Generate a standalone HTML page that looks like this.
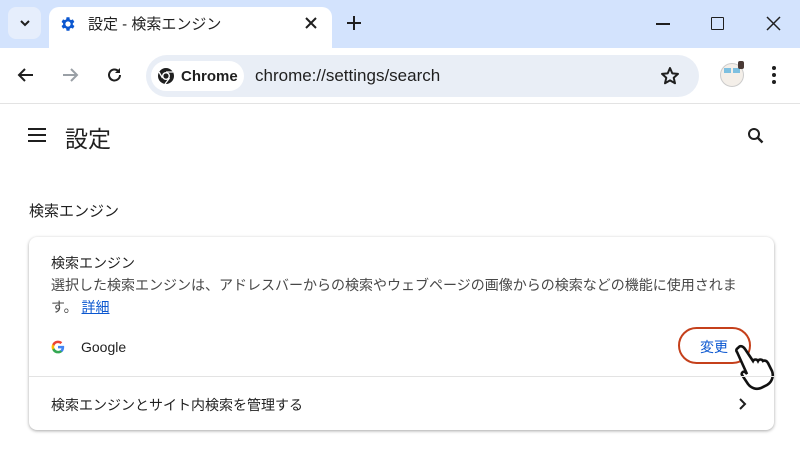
<!DOCTYPE html><html><head><meta charset="utf-8"><style>
*{margin:0;padding:0;box-sizing:border-box}
body{width:800px;height:457px;overflow:hidden;background:#fff;font-family:"Liberation Sans","Noto Sans CJK JP",sans-serif;color:#1f1f1f;position:relative}
.abs{position:absolute}
</style></head><body>
<div class="abs" style="left:0;top:0;width:800px;height:48px;background:#d3e3fd"></div>
<div class="abs" style="left:8px;top:7px;width:33px;height:32px;border-radius:8px;background:#e6eefc"></div>
<svg class="abs" style="left:18px;top:17px" width="14" height="12"><path d="M3 4l4 4 4-4" stroke="#1f1f1f" stroke-width="2" fill="none"/></svg>
<div class="abs" style="left:49px;top:7px;width:283px;height:45px;background:#fff;border-radius:10px 10px 0 0"></div>
<svg class="abs" style="left:59px;top:15px" width="18" height="18" viewBox="0 0 24 24"><path fill="#0b57d0" d="M19.4 13a7.5 7.5 0 000-2l2.1-1.6-2-3.5-2.5 1a7 7 0 00-1.7-1L15 3h-4l-.4 2.9a7 7 0 00-1.7 1l-2.5-1-2 3.5L6.5 11a7.5 7.5 0 000 2l-2.1 1.6 2 3.5 2.5-1a7 7 0 001.7 1L11 21h4l.4-2.9a7 7 0 001.7-1l2.5 1 2-3.5zM13 15.5a3.5 3.5 0 110-7 3.5 3.5 0 010 7z" transform="translate(-1 0)"/></svg>
<div class="abs" style="left:88px;top:13px;font-size:15px;color:#1f1f1f">設定 - 検索エンジン</div>
<svg class="abs" style="left:305px;top:17px" width="12" height="12"><path d="M1 1l10 10M11 1L1 11" stroke="#1f1f1f" stroke-width="2"/></svg>
<svg class="abs" style="left:347px;top:16px" width="14" height="14"><path d="M7 0v14M0 7h14" stroke="#1f1f1f" stroke-width="2"/></svg>
<div class="abs" style="left:656px;top:23px;width:14px;height:1.5px;background:#1f1f1f"></div>
<div class="abs" style="left:711px;top:17px;width:13px;height:13px;border:1.5px solid #1f1f1f;border-radius:1px"></div>
<svg class="abs" style="left:766px;top:16px" width="15" height="15"><path d="M1 1l13 13M14 1L1 14" stroke="#1f1f1f" stroke-width="1.5"/></svg>
<div class="abs" style="left:0;top:48px;width:800px;height:56px;background:#fff;border-radius:10px 10px 0 0"></div>
<div class="abs" style="left:0;top:103px;width:800px;height:1px;background:#e3e3e3"></div>
<svg class="abs" style="left:17px;top:67px" width="18" height="16"><path d="M16 8H3M8 2L2 8l6 6" stroke="#1f1f1f" stroke-width="2" fill="none"/></svg>
<svg class="abs" style="left:61px;top:67px" width="18" height="16"><path d="M2 8h13M10 2l6 6-6 6" stroke="#9aa0a6" stroke-width="2" fill="none"/></svg>
<svg class="abs" style="left:106px;top:66px" width="18" height="18"><path d="M14 9a5.5 5.5 0 11-1.6-3.9" stroke="#1f1f1f" stroke-width="2" fill="none"/><path d="M14 2v5h-5z" fill="#1f1f1f"/></svg>
<div class="abs" style="left:146px;top:55px;width:553px;height:42px;border-radius:21px;background:#e9eef6"></div>
<div class="abs" style="left:151px;top:61px;width:93px;height:30px;border-radius:15px;background:#fff"></div>
<svg class="abs" style="left:157px;top:67px" width="18" height="18" viewBox="0 0 18 18"><circle cx="9" cy="9" r="8" fill="#1f1f1f"/><circle cx="9" cy="9" r="4" fill="#fff"/><circle cx="9" cy="9" r="2.6" fill="#1f1f1f"/><path d="M9 5h7M5.5 11L2 5M12.5 11L8 17" stroke="#fff" stroke-width="1.3"/></svg>
<div class="abs" style="left:181px;top:68px;font-size:15px;font-weight:bold">Chrome</div>
<div class="abs" style="left:255px;top:66px;font-size:17px;color:#1f1f1f">chrome://settings/search</div>
<svg class="abs" style="left:660px;top:66px" width="20" height="20" viewBox="0 0 20 20"><path d="M10 2l2.3 5.4 5.7.5-4.3 3.8 1.3 5.6L10 14.4l-5 2.9 1.3-5.6L2 7.9l5.7-.5z" fill="none" stroke="#1f1f1f" stroke-width="2" stroke-linejoin="round"/></svg>
<div class="abs" style="left:720px;top:63px;width:24px;height:24px;border-radius:50%;background:#f4efe9;border:1px solid #ccc"></div>
<div class="abs" style="left:724px;top:68px;width:7px;height:5px;background:#7ec0e0"></div>
<div class="abs" style="left:733px;top:68px;width:7px;height:5px;background:#7ec0e0"></div>
<div class="abs" style="left:738px;top:61px;width:6px;height:8px;background:#4a3a35;border-radius:2px"></div>
<div class="abs" style="left:772px;top:66px;width:4px;height:4px;border-radius:50%;background:#1f1f1f;box-shadow:0 7px 0 #1f1f1f,0 14px 0 #1f1f1f"></div>
<svg class="abs" style="left:28px;top:128px" width="18" height="14"><path d="M0 1h18M0 7h18M0 13h18" stroke="#1f1f1f" stroke-width="2"/></svg>
<div class="abs" style="left:65px;top:120px;font-size:23px">設定</div>
<svg class="abs" style="left:747px;top:127px" width="18" height="18"><circle cx="7" cy="7" r="5" stroke="#1f1f1f" stroke-width="2" fill="none"/><path d="M10.5 10.5l5 5" stroke="#1f1f1f" stroke-width="2.4"/></svg>
<div class="abs" style="left:29px;top:200px;font-size:15px">検索エンジン</div>
<div class="abs" style="left:29px;top:237px;width:745px;height:193px;background:#fff;border-radius:8px;box-shadow:0 1px 3px rgba(0,0,0,.35)"></div>
<div class="abs" style="left:51px;top:253px;font-size:14px">検索エンジン</div>
<div class="abs" style="left:51px;top:274px;font-size:14px;line-height:22px;width:710px;color:#474747">選択した検索エンジンは、アドレスバーからの検索やウェブページの画像からの検索などの機能に使用されます。 <span style="color:#0b57d0;text-decoration:underline">詳細</span></div>
<svg class="abs" style="left:51px;top:340px" width="14" height="14" viewBox="0 0 24 24"><path fill="#4285f4" d="M22.6 12.3c0-.8-.1-1.5-.2-2.3H12v4.3h6a5 5 0 01-2.2 3.4v2.8h3.6c2-2 3.2-4.8 3.2-8.2z"/><path fill="#34a853" d="M12 23c3 0 5.5-1 7.3-2.7l-3.6-2.8a6.6 6.6 0 01-9.9-3.5H2.2v2.9A11 11 0 0012 23z"/><path fill="#fbbc05" d="M5.8 14a6.6 6.6 0 010-4.1V7.1H2.2a11 11 0 000 9.8z"/><path fill="#ea4335" d="M12 5.4c1.6 0 3 .6 4.2 1.6l3.1-3.1A11 11 0 002.2 7.1l3.6 2.9A6.6 6.6 0 0112 5.4z"/></svg>
<div class="abs" style="left:81px;top:339px;font-size:14px">Google</div>
<div class="abs" style="left:678px;top:327px;width:73px;height:37px;border:2.5px solid #c5401b;border-radius:19px"></div>
<div class="abs" style="left:700px;top:337px;font-size:14px;color:#0b57d0">変更</div>
<svg class="abs" style="left:732px;top:340px" width="52" height="52" viewBox="0 0 52 52"><path d="M6 8c2-3 5-2 7 1l8 12c1-2 4-2 5 0 1-2 4-2 5 0 2-1 4 0 5 2l4 8c2 5 0 11-5 14l-6 3c-5 2-10 0-13-4l-6-9c-1-2 1-4 3-3l2 2L5 12c-1-1-1-3 1-4z" fill="#fff" stroke="#111" stroke-width="2.6"/></svg>
<div class="abs" style="left:29px;top:376px;width:745px;height:1px;background:#e3e3e3"></div>
<div class="abs" style="left:51px;top:395px;font-size:14px">検索エンジンとサイト内検索を管理する</div>
<svg class="abs" style="left:738px;top:397px" width="10" height="14"><path d="M2 2l5 5-5 5" stroke="#1f1f1f" stroke-width="2" fill="none"/></svg>
</body></html>
